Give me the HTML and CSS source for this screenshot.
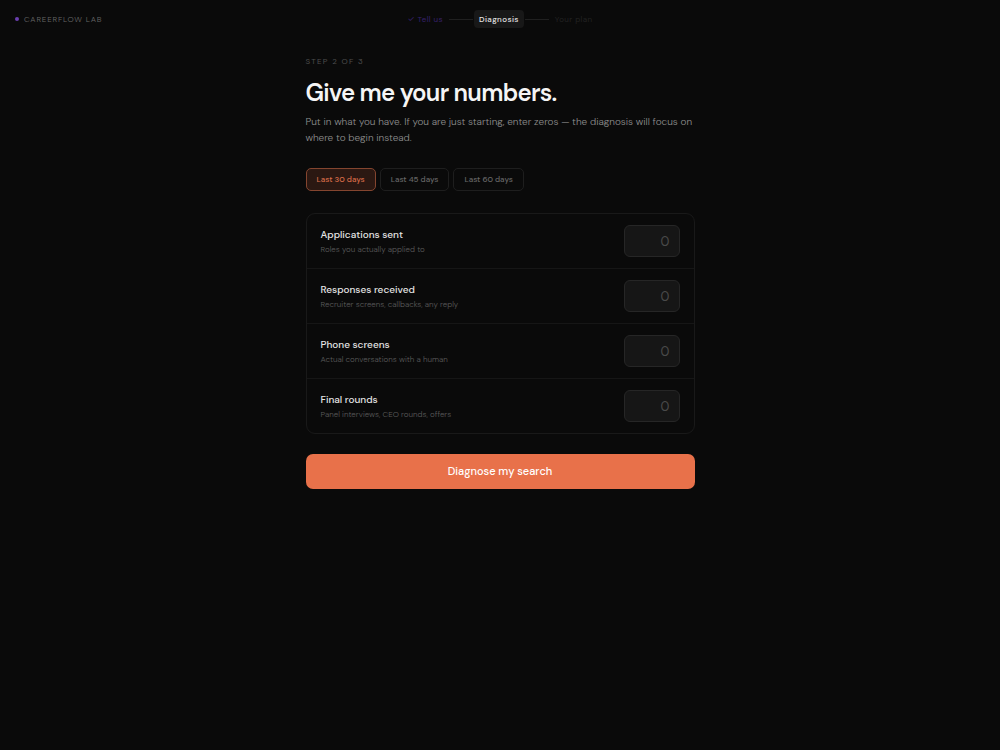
FILE: index.html
```html
<!DOCTYPE html>
<html lang="en">
<head>
<meta charset="utf-8">
<meta name="viewport" content="width=device-width, initial-scale=1">
<title>CareerFlow Lab</title>
<link rel="stylesheet" href="styles.css">
</head>
<body>
<header class="topbar">
  <div class="brand"><span class="brand-dot"></span>CAREERFLOW LAB</div>
  <nav class="steps" aria-label="Progress">
    <span class="step step-done">✓ Tell us</span>
    <span class="step-line"></span>
    <span class="step step-current" aria-current="step">Diagnosis</span>
    <span class="step-line"></span>
    <span class="step step-next">Your plan</span>
  </nav>
</header>
<main class="content">
  <p class="eyebrow">STEP 2 OF 3</p>
  <h1 class="title">Give me your numbers.</h1>
  <p class="intro">Put in what you have. If you are just starting, enter zeros — the diagnosis will focus on where to begin instead.</p>
  <div class="periods">
    <button type="button" class="period period-active" aria-pressed="true">Last 30 days</button>
    <button type="button" class="period" aria-pressed="false">Last 45 days</button>
    <button type="button" class="period" aria-pressed="false">Last 60 days</button>
  </div>
  <form>
    <div class="card">
      <div class="row">
        <label class="label" for="applications"><span class="name">Applications sent</span><span class="hint">Roles you actually applied to</span></label>
        <input class="count" id="applications" type="text" inputmode="numeric" placeholder="0">
      </div>
      <div class="row">
        <label class="label" for="responses"><span class="name">Responses received</span><span class="hint">Recruiter screens, callbacks, any reply</span></label>
        <input class="count" id="responses" type="text" inputmode="numeric" placeholder="0">
      </div>
      <div class="row">
        <label class="label" for="screens"><span class="name">Phone screens</span><span class="hint">Actual conversations with a human</span></label>
        <input class="count" id="screens" type="text" inputmode="numeric" placeholder="0">
      </div>
      <div class="row">
        <label class="label" for="finals"><span class="name">Final rounds</span><span class="hint">Panel interviews, CEO rounds, offers</span></label>
        <input class="count" id="finals" type="text" inputmode="numeric" placeholder="0">
      </div>
    </div>
    <button type="submit" class="submit">Diagnose my search</button>
  </form>
</main>
</body>
</html>
```

FILE: styles.css
```css
* {
  box-sizing: border-box;
}

body {
  margin: 0;
  min-height: 100vh;
  background: #0a0a0a;
  color: #f5f5f5;
  font-family: "DM Sans", Inter, sans-serif;
}

button,
input {
  font-family: inherit;
}

.topbar {
  display: grid;
  grid-template-columns: 1fr auto 1fr;
  align-items: center;
  height: 38px;
  padding: 0 15px;
}

.brand {
  display: flex;
  align-items: center;
  gap: 5px;
  color: #666;
  font-size: 8px;
  font-weight: 300;
  line-height: 10px;
  letter-spacing: 0.1em;
}

.brand-dot {
  width: 4px;
  height: 4px;
  border-radius: 50%;
  background: #6b3fb0;
}

.steps {
  display: flex;
  align-items: center;
  gap: 1px;
  font-size: 8px;
  line-height: 10px;
  letter-spacing: 0.05em;
}

.step {
  padding: 4px 5px;
  border-radius: 4px;
}

.step-done {
  color: #37216a;
}

.step-current {
  background: #181818;
  color: #e6e6e6;
  font-weight: 500;
}

.step-next {
  color: #222;
}

.step-line {
  width: 24px;
  height: 1px;
  background: #202020;
}

.content {
  max-width: 389px;
  margin: 0 auto;
  padding-top: 17px;
}

.eyebrow {
  margin: 0;
  color: #4d4d4d;
  font-size: 8px;
  line-height: 12px;
  letter-spacing: 0.16em;
}

.title {
  margin: 10px 0 6px;
  font-size: 24px;
  font-weight: 600;
  line-height: 31px;
  letter-spacing: -0.03em;
}

.intro {
  margin: 0;
  color: #8f8f8f;
  font-size: 10px;
  font-weight: 300;
  line-height: 16px;
}

.periods {
  display: flex;
  gap: 4px;
  margin: 22px 0;
}

.period {
  padding: 5px 10px;
  border: 1px solid #1e1e1e;
  border-radius: 5px;
  background: transparent;
  color: #666;
  font-size: 8px;
  font-weight: 500;
  line-height: 11px;
}

.period-active {
  border-color: #84452f;
  background: #2b1812;
  color: #d86c48;
}

.card {
  border: 1px solid #191919;
  border-radius: 9px;
}

.row {
  display: flex;
  align-items: center;
  justify-content: space-between;
  padding: 11px 14px;
}

.row + .row {
  border-top: 1px solid #161616;
}

.name,
.hint {
  display: block;
}

.name {
  color: #e5e5e5;
  font-size: 10px;
  font-weight: 500;
  line-height: 15px;
}

.hint {
  color: #5a5a5a;
  font-size: 8px;
  font-weight: 300;
  line-height: 14px;
}

.count {
  width: 56px;
  height: 32px;
  padding: 0 9px;
  border: 1px solid #262626;
  border-radius: 6px;
  background: #161616;
  color: #f5f5f5;
  font-size: 13px;
  text-align: right;
}

.count::placeholder {
  color: #4a4a4a;
}

.submit {
  display: block;
  width: 100%;
  margin-top: 20px;
  padding: 10px;
  border: 0;
  border-radius: 7px;
  background: #e8714a;
  color: #fff;
  font-size: 11px;
  font-weight: 500;
  line-height: 15px;
}
```
